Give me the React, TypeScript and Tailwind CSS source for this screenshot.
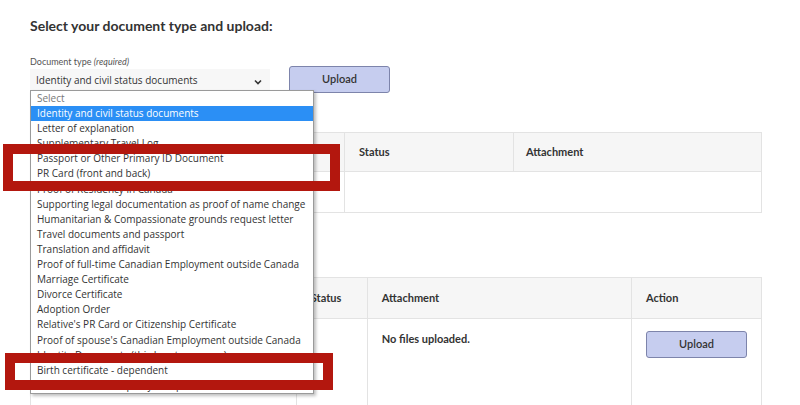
import React from 'react'

const options = [
  'Select',
  'Identity and civil status documents',
  'Letter of explanation',
  'Supplementary Travel Log',
  'Passport or Other Primary ID Document',
  'PR Card (front and back)',
  'Proof of Residency in Canada',
  'Supporting legal documentation as proof of name change',
  'Humanitarian & Compassionate grounds request letter',
  'Travel documents and passport',
  'Translation and affidavit',
  'Proof of full-time Canadian Employment outside Canada',
  'Marriage Certificate',
  'Divorce Certificate',
  'Adoption Order',
  "Relative's PR Card or Citizenship Certificate",
  "Proof of spouse's Canadian Employment outside Canada",
  'Identity Documents (third party sponsor)',
  'Birth certificate - dependent',
  'Proof of relationship to your sponsor',
]

function UploadButton() {
  return (
    <button
      type="button"
      className="h-[27px] w-[101px] rounded-[3px] border border-[#7d84ab] bg-[#c6cdef] text-[11px] font-semibold text-[#333]"
    >
      Upload
    </button>
  )
}

function Dropdown() {
  return (
    <div className="absolute left-[30px] top-[90px] w-[284px] border border-[#9a9a9a] bg-white shadow-[2px_2px_3px_rgba(0,0,0,0.25)] [font-family:'Open_Sans',sans-serif]">
      {options.map((label, i) => (
        <div
          key={label}
          className={
            i === 1
              ? 'h-[15.1px] overflow-hidden whitespace-nowrap bg-[#2b8ff5] pl-[6px] text-[10px] leading-[15.1px] text-white'
              : i === 0
                ? 'h-[15.1px] overflow-hidden whitespace-nowrap pl-[6px] text-[10px] leading-[15.1px] text-[#777]'
                : 'h-[15.1px] overflow-hidden whitespace-nowrap pl-[6px] text-[10px] leading-[15.1px] text-[#333]'
          }
        >
          {label}
        </div>
      ))}
    </div>
  )
}

export default function App() {
  return (
    <div className="relative h-[405px] w-[800px] overflow-hidden bg-white text-[#333] [font-family:Lato,'Open_Sans',sans-serif]">
      <div className="px-[30px] pt-[16px]">
        <h1 className="text-[14px] font-bold leading-[20px] text-[#333]">
          Select your document type and upload:
        </h1>

        <div className="mt-[20px] flex items-end gap-[19px]">
          <div className="flex flex-col">
            <label className="text-[9px] leading-[12px] text-[#555]">
              Document type <span className="italic">(required)</span>
            </label>
            <div className="mt-[1px] flex h-[23px] w-[240px] items-center justify-between bg-[#f7f7f7] pl-[6px] pr-[8px] [font-family:'Open_Sans',sans-serif]">
              <span className="text-[10px] text-[#333]">Identity and civil status documents</span>
              <svg width="8" height="6" viewBox="0 0 8 6" className="mt-[2px]">
                <path d="M1 1.5 L4 4.5 L7 1.5" fill="none" stroke="#333" strokeWidth="1.6" />
              </svg>
            </div>
          </div>
          <div className="mb-[-1px]">
            <UploadButton />
          </div>
        </div>

        <table className="mt-[40px] w-[732px] border-collapse text-[11px]">
          <thead>
            <tr className="h-[39px] bg-[#f6f6f6]">
              <th className="w-[314px] border border-[#e3e3e3]"></th>
              <th className="w-[169px] border border-[#e3e3e3] px-[14px] text-left font-bold">Status</th>
              <th className="border border-[#e3e3e3] px-[12px] text-left font-bold">Attachment</th>
            </tr>
          </thead>
          <tbody>
            <tr className="h-[41px]">
              <td className="border border-[#e3e3e3]"></td>
              <td className="border-y border-[#e3e3e3]"></td>
              <td className="border border-l-0 border-[#e3e3e3]"></td>
            </tr>
          </tbody>
        </table>

        <table className="mt-[64px] w-[732px] border-collapse text-[11px]">
          <thead>
            <tr className="h-[41px] bg-[#f6f6f6]">
              <th className="w-[267px] border border-[#e3e3e3]"></th>
              <th className="w-[71px] border border-[#e3e3e3] px-[14px] text-left font-bold">Status</th>
              <th className="w-[265px] border border-[#e3e3e3] px-[14px] text-left font-bold">Attachment</th>
              <th className="border border-[#e3e3e3] px-[14px] text-left font-bold">Action</th>
            </tr>
          </thead>
          <tbody>
            <tr className="h-[90px] align-top">
              <td className="border border-[#e3e3e3]"></td>
              <td className="border border-[#e3e3e3]"></td>
              <td className="border border-[#e3e3e3] px-[14px] pt-[12px] font-bold">No files uploaded.</td>
              <td className="border border-[#e3e3e3] px-[14px] pt-[12px]">
                <UploadButton />
              </td>
            </tr>
          </tbody>
        </table>
      </div>

      <Dropdown />

      <div className="absolute left-[3px] top-[144px] h-[47px] w-[337px] border-[10px] border-[#b3170e]" />
      <div className="absolute left-[5px] top-[353px] h-[37px] w-[328px] border-[10px] border-[#b3170e]" />
    </div>
  )
}
